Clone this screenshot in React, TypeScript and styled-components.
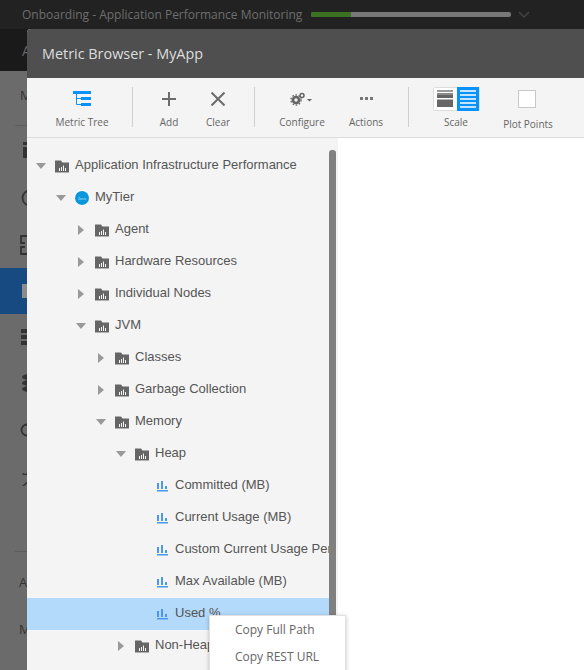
import { FC } from 'react'
import styled, { createGlobalStyle } from 'styled-components'

const GlobalStyle = createGlobalStyle`
  html, body {
    margin: 0;
    padding: 0;
    background: #6b6b6b;
  }
  * {
    box-sizing: border-box;
  }
`

const Page = styled.div`
  position: relative;
  width: 584px;
  height: 670px;
  overflow: hidden;
  display: flex;
  flex-direction: column;
  background: #6b6b6b;
  font-family: "Open Sans", sans-serif;
`
const TopBar = styled.div`
  height: 29px;
  flex: none;
  display: flex;
  align-items: center;
  padding-left: 22px;
  background: #222222;
  color: #6e6e6e;
  font-size: 12px;
`
const Progress = styled.div`
  width: 200px;
  height: 5px;
  margin-left: 9px;
  border-radius: 2px;
  background: #777777;
  overflow: hidden;
`
const ProgressFill = styled.div`
  width: 40px;
  height: 100%;
  background: #3b7222;
`
const Chevron = styled.svg`
  width: 12px;
  height: 8px;
  margin-left: 7px;
`
const NavBar = styled.div`
  height: 42px;
  flex: none;
  display: flex;
  align-items: center;
  padding-left: 22px;
  background: #1a1a1a;
  color: #666666;
  font-size: 14px;
`
const SideTitle = styled.div`
  height: 55px;
  flex: none;
  margin-left: 15px;
  padding: 15px 0 0 5px;
  border-bottom: 1px solid #5c5c5c;
  color: #333333;
  font-size: 13px;
  line-height: 18px;
`
const SideItem = styled.div<{ $h: number; $active?: boolean }>`
  height: ${p => p.$h}px;
  flex: none;
  display: flex;
  align-items: center;
  padding-left: 20px;
  background: ${p => (p.$active ? '#164a80' : 'transparent')};
`
const SideGap = styled.div`
  height: 50px;
  flex: none;
  margin-left: 15px;
  border-bottom: 1px solid #5c5c5c;
`
const SideLabel = styled.div<{ $top: number }>`
  flex: none;
  margin-top: ${p => p.$top}px;
  padding-left: 19px;
  color: #333333;
  font-size: 13px;
  line-height: 18px;
`

const Modal = styled.div`
  position: absolute;
  left: 27px;
  top: 29px;
  width: 570px;
  height: 660px;
  display: flex;
  flex-direction: column;
  background: #ffffff;
  border-radius: 4px 0 0 0;
  overflow: hidden;
`
const ModalHeader = styled.div`
  height: 49px;
  flex: none;
  display: flex;
  align-items: center;
  padding-left: 15px;
  background: #4f4f4f;
  color: #dedede;
  font-size: 14.4px;
`
const Toolbar = styled.div`
  height: 60px;
  flex: none;
  display: flex;
  align-items: flex-start;
  padding-top: 9px;
  background: #f4f4f4;
  border-bottom: 1px solid #dcdcdc;
`
const Tool = styled.div<{ $w: number; $ml: number }>`
  width: ${p => p.$w}px;
  margin-left: ${p => p.$ml}px;
  flex: none;
  display: flex;
  flex-direction: column;
  align-items: center;
  overflow: visible;
`
const ToolIcon = styled.div`
  height: 24px;
  display: flex;
  align-items: center;
  justify-content: center;
`
const ToolLabel = styled.div<{ $mt?: number }>`
  margin-top: ${p => p.$mt ?? 4}px;
  color: #666666;
  font-size: 10px;
  line-height: 14px;
  white-space: nowrap;
`
const ToolDivider = styled.div<{ $ml: number }>`
  width: 1px;
  height: 40px;
  flex: none;
  margin-left: ${p => p.$ml}px;
  background: #d0d0d0;
`
const PlotCheck = styled.div`
  width: 18px;
  height: 18px;
  margin-right: 2px;
  background: #ffffff;
  border: 1px solid #c8c8c8;
`

const Body = styled.div`
  flex: 1;
  display: flex;
  min-height: 0;
`
const TreePane = styled.div`
  width: 311px;
  flex: none;
  display: flex;
  background: #f4f4f4;
`
const TreeList = styled.div`
  width: 302px;
  flex: none;
  padding-top: 12px;
  overflow: hidden;
`
const ScrollTrack = styled.div`
  width: 9px;
  flex: none;
  padding: 12px 2px 0 0;
`
const ScrollThumb = styled.div`
  height: 100%;
  background: #808080;
  border-radius: 3px 3px 0 0;
`
const Row = styled.div<{ $level: number; $selected?: boolean }>`
  height: 32px;
  display: flex;
  align-items: center;
  padding-left: ${p => 7 + p.$level * 20}px;
  background: ${p => (p.$selected ? '#b3d9fb' : 'transparent')};
  white-space: nowrap;
`
const ArrowSlot = styled.div`
  width: 14px;
  height: 12px;
  flex: none;
  display: flex;
  align-items: center;
  justify-content: center;
  margin-right: 7px;
`
const NodeIcon = styled.svg`
  width: 14px;
  height: 14px;
  flex: none;
`
const JavaBadge = styled.svg`
  width: 16px;
  height: 16px;
  flex: none;
  margin: 0 -1px;
`
const RowLabel = styled.span`
  margin-left: 6px;
  padding-bottom: 2px;
  color: #555555;
  font-family: "Liberation Sans", Arial, sans-serif;
  font-size: 13px;
  line-height: 16px;
`
const ChartPane = styled.div`
  flex: 1;
  background: #ffffff;
`

const ContextMenu = styled.div`
  position: absolute;
  left: 209px;
  top: 615px;
  width: 137px;
  height: 70px;
  background: #ffffff;
  border: 1px solid #e2e2e2;
  box-shadow: 0 1px 4px rgba(0, 0, 0, 0.25);
`
const MenuItem = styled.div`
  height: 27px;
  display: flex;
  align-items: center;
  padding-left: 25px;
  color: #666666;
  font-size: 12px;
`

type Kind = 'folder' | 'java' | 'metric'

interface NodeData {
  label: string
  level: number
  kind: Kind
  open?: boolean
  selected?: boolean
}

const nodes: NodeData[] = [
  { label: 'Application Infrastructure Performance', level: 0, kind: 'folder', open: true },
  { label: 'MyTier', level: 1, kind: 'java', open: true },
  { label: 'Agent', level: 2, kind: 'folder', open: false },
  { label: 'Hardware Resources', level: 2, kind: 'folder', open: false },
  { label: 'Individual Nodes', level: 2, kind: 'folder', open: false },
  { label: 'JVM', level: 2, kind: 'folder', open: true },
  { label: 'Classes', level: 3, kind: 'folder', open: false },
  { label: 'Garbage Collection', level: 3, kind: 'folder', open: false },
  { label: 'Memory', level: 3, kind: 'folder', open: true },
  { label: 'Heap', level: 4, kind: 'folder', open: true },
  { label: 'Committed (MB)', level: 5, kind: 'metric' },
  { label: 'Current Usage (MB)', level: 5, kind: 'metric' },
  { label: 'Custom Current Usage Percent', level: 5, kind: 'metric' },
  { label: 'Max Available (MB)', level: 5, kind: 'metric' },
  { label: 'Used %', level: 5, kind: 'metric', selected: true },
  { label: 'Non-Heap', level: 4, kind: 'folder', open: false },
]

const Arrow: FC<{ open?: boolean }> = ({ open }) => (
  <svg width="10" height="10" viewBox="0 0 10 10">
    {open ? <path d="M0 2h10L5 8z" fill="#999999" /> : <path d="M2 0l6 5-6 5z" fill="#999999" />}
  </svg>
)

const FolderIcon: FC = () => (
  <NodeIcon viewBox="0 0 14 14">
    <path d="M0 1.5h6l1.5 2H14V13.5H0z" fill="#666666" />
    <path d="M4 9h1v3H4zM6 8h1v4H6zM8 6.5h1V12H8zM10 9h1v3h-1z" fill="#f4f4f4" />
  </NodeIcon>
)

const JavaIcon: FC = () => (
  <JavaBadge viewBox="0 0 16 16">
    <circle cx="8" cy="8" r="8" fill="#ffffff" />
    <circle cx="8" cy="8" r="7" fill="#0a97dc" />
    <text x="8" y="9.5" fontSize="4.5" fill="#bfe6fa" textAnchor="middle" fontFamily="Liberation Serif, serif">Java</text>
  </JavaBadge>
)

const MetricIcon: FC = () => (
  <NodeIcon viewBox="0 0 14 14">
    <path d="M2 4h2v6H2zM6 2h2v8H6zM10 7h2v3h-2zM2 11h11v1.5H2z" fill="#4a96f0" />
  </NodeIcon>
)

const TreeRow: FC<{ node: NodeData }> = ({ node }) => (
  <Row $level={node.level} $selected={node.selected}>
    <ArrowSlot>{node.kind !== 'metric' && <Arrow open={node.open} />}</ArrowSlot>
    {node.kind === 'folder' && <FolderIcon />}
    {node.kind === 'java' && <JavaIcon />}
    {node.kind === 'metric' && <MetricIcon />}
    <RowLabel>{node.label}</RowLabel>
  </Row>
)

const sideColor = '#333333'

const App: FC = () => {
  return (
    <Page>
      <GlobalStyle />
      <TopBar>
        Onboarding - Application Performance Monitoring
        <Progress><ProgressFill /></Progress>
        <Chevron viewBox="0 0 12 8">
          <path d="M1 1l5 5 5-5" fill="none" stroke="#444444" strokeWidth="1.5" />
        </Chevron>
      </TopBar>
      <NavBar>A</NavBar>
      <SideTitle>M</SideTitle>
      <SideItem $h={48}>
        <svg width="8" height="16" viewBox="0 0 8 16">
          <path d="M3 0h5v3H3zM3 5h5v11H3z" fill={sideColor} />
        </svg>
      </SideItem>
      <SideItem $h={48}>
        <svg width="16" height="18" viewBox="0 0 16 18" style={{ marginLeft: 1 }}>
          <circle cx="9" cy="9" r="7.5" fill="none" stroke={sideColor} strokeWidth="1.8" />
        </svg>
      </SideItem>
      <SideItem $h={46}>
        <svg width="14" height="20" viewBox="0 0 14 20">
          <path d="M14 1H1v7h4M14 19H1v-7h4" fill="none" stroke={sideColor} strokeWidth="1.8" />
        </svg>
      </SideItem>
      <SideItem $h={46} $active>
        <svg width="7" height="14" viewBox="0 0 7 14" style={{ marginLeft: 2 }}>
          <rect width="7" height="14" fill="#8c8c8c" />
        </svg>
      </SideItem>
      <SideItem $h={46}>
        <svg width="8" height="16" viewBox="0 0 8 16" style={{ marginLeft: 1 }}>
          <path d="M0 0h8v4H0zM0 6h8v4H0zM0 12h8v4H0z" fill={sideColor} />
        </svg>
      </SideItem>
      <SideItem $h={46}>
        <svg width="8" height="18" viewBox="0 0 8 18" style={{ marginLeft: 1 }}>
          <ellipse cx="8" cy="3" rx="7" ry="3" fill={sideColor} />
          <ellipse cx="8" cy="9" rx="7" ry="3" fill={sideColor} />
          <ellipse cx="8" cy="15" rx="7" ry="3" fill={sideColor} />
        </svg>
      </SideItem>
      <SideItem $h={48}>
        <svg width="10" height="14" viewBox="0 0 10 14">
          <circle cx="7" cy="7" r="5.5" fill="none" stroke={sideColor} strokeWidth="1.8" />
        </svg>
      </SideItem>
      <SideItem $h={48}>
        <svg width="9" height="16" viewBox="0 0 9 16" style={{ marginLeft: 2 }}>
          <path d="M0 3l4 1 3-4 2 2v3H4l-3 0zM0 16l7-6 2 1v2H6l-4 3z" fill={sideColor} />
        </svg>
      </SideItem>
      <SideGap />
      <SideLabel $top={21}>A</SideLabel>
      <SideLabel $top={29}>M</SideLabel>

      <Modal>
        <ModalHeader>Metric Browser - MyApp</ModalHeader>
        <Toolbar>
          <Tool $w={100} $ml={5}>
            <ToolIcon>
              <svg width="18" height="16" viewBox="0 0 18 16">
                <path d="M0 0h18v3H0zM8 6h10v3H8zM8 12h10v3H8z" fill="#0a92fb" />
                <path d="M3.5 3v10.5H8M3.5 7.5H8" fill="none" stroke="#0a92fb" />
              </svg>
            </ToolIcon>
            <ToolLabel>Metric Tree</ToolLabel>
          </Tool>
          <ToolDivider $ml={0} />
          <Tool $w={60} $ml={6}>
            <ToolIcon>
              <svg width="14" height="14" viewBox="0 0 14 14">
                <path d="M7 0v14M0 7h14" stroke="#6c6c6c" strokeWidth="2" />
              </svg>
            </ToolIcon>
            <ToolLabel>Add</ToolLabel>
          </Tool>
          <Tool $w={36} $ml={1}>
            <ToolIcon>
              <svg width="14" height="14" viewBox="0 0 14 14">
                <path d="M0.5 0.5l13 13M13.5 0.5l-13 13" stroke="#6c6c6c" strokeWidth="2" />
              </svg>
            </ToolIcon>
            <ToolLabel>Clear</ToolLabel>
          </Tool>
          <ToolDivider $ml={18} />
          <Tool $w={60} $ml={17}>
            <ToolIcon>
              <svg width="24" height="14" viewBox="0 0 24 14">
                <circle cx="6" cy="8" r="3" fill="none" stroke="#666666" strokeWidth="2.6" />
                <circle cx="6" cy="8" r="5" fill="none" stroke="#666666" strokeWidth="1.4" strokeDasharray="1.6 1.6" />
                <circle cx="12" cy="3.5" r="2" fill="none" stroke="#666666" strokeWidth="1.5" />
                <path d="M17 7h5l-2.5 2.5z" fill="#666666" />
              </svg>
            </ToolIcon>
            <ToolLabel>Configure</ToolLabel>
          </Tool>
          <Tool $w={60} $ml={4}>
            <ToolIcon>
              <svg width="14" height="4" viewBox="0 0 14 4">
                <path d="M1 0h3v3H1zM6 0h3v3H6zM11 0h3v3h-3z" fill="#777777" />
              </svg>
            </ToolIcon>
            <ToolLabel>Actions</ToolLabel>
          </Tool>
          <ToolDivider $ml={12} />
          <Tool $w={60} $ml={17}>
            <ToolIcon>
              <svg width="47" height="24" viewBox="0 0 47 24">
                <rect width="47" height="24" rx="1" fill="#ffffff" />
                <rect x="0.5" y="0.5" width="46" height="23" rx="1" fill="none" stroke="#dddddd" />
                <path d="M4 3h16v2H4z" fill="#9a9a9a" />
                <path d="M4 6h16v2H4z" fill="#8a8a8a" />
                <path d="M4 8h16v3H4z" fill="#666666" />
                <path d="M4 12.5h16v7.5H4z" fill="#666666" />
                <rect x="24" y="0" width="22" height="24" fill="#0a92fb" />
                <path d="M27 4h16M27 8h16M27 12h16M27 16h16M27 20h16" stroke="#ffffff" strokeWidth="1.3" />
              </svg>
            </ToolIcon>
            <ToolLabel>Scale</ToolLabel>
          </Tool>
          <Tool $w={64} $ml={10}>
            <ToolIcon>
              <PlotCheck />
            </ToolIcon>
            <ToolLabel $mt={6}>Plot Points</ToolLabel>
          </Tool>
        </Toolbar>
        <Body>
          <TreePane>
            <TreeList>
              {nodes.map(node => <TreeRow key={node.label} node={node} />)}
            </TreeList>
            <ScrollTrack><ScrollThumb /></ScrollTrack>
          </TreePane>
          <ChartPane />
        </Body>
      </Modal>

      <ContextMenu>
        <MenuItem>Copy Full Path</MenuItem>
        <MenuItem>Copy REST URL</MenuItem>
      </ContextMenu>
    </Page>
  )
}

export default App
